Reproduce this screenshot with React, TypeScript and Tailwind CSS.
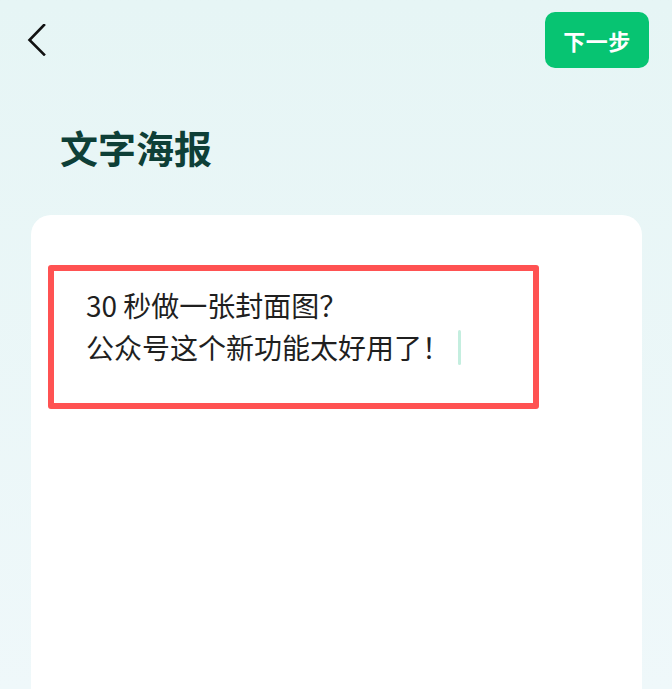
export default function App() {
  return (
    <div className="h-[689px] overflow-hidden flex flex-col bg-gradient-to-b from-[#e6f5f5] to-[#eff8fa] font-['Noto_Sans_CJK_SC','Noto_Sans',sans-serif]">
      {/* Top bar */}
      <div className="flex items-center justify-between pl-[27px] pr-[23px] pt-[12px]">
        <button className="w-[20px] h-[32px]" aria-label="返回">
          <svg width="20" height="32" viewBox="0 0 20 32" fill="none">
            <path d="M17 1 L2.5 16 L17 30.5" stroke="#111" strokeWidth="2.6" strokeLinecap="square" />
          </svg>
        </button>
        <button className="w-[104px] h-[56px] rounded-[10px] bg-[#07c472] text-white text-[22px] font-bold tracking-[0.5px]">
          下一步
        </button>
      </div>

      {/* Title */}
      <h1 className="mt-[60px] pl-[60px] text-[38px] leading-[38px] font-bold text-[#0e3f37]">
        文字海报
      </h1>

      {/* Editor card */}
      <div className="mt-[49px] ml-[31px] mr-[30px] flex-1 rounded-t-[20px] bg-white pt-[50px] pl-[17px]">
        <div className="w-[491px] h-[144px] rounded-[3px] border-[6px] border-[#ff5252] pl-[32px] pt-[13px] text-[28px] leading-[42px] text-[#1f1f1f]">
          <p>30 秒做一张封面图？</p>
          <p className="flex items-center">
            公众号这个新功能太好用了！
            <span className="ml-[8px] inline-block w-[3px] h-[35px] rounded-full bg-[#c4eedf]" />
          </p>
        </div>
      </div>
    </div>
  );
}
